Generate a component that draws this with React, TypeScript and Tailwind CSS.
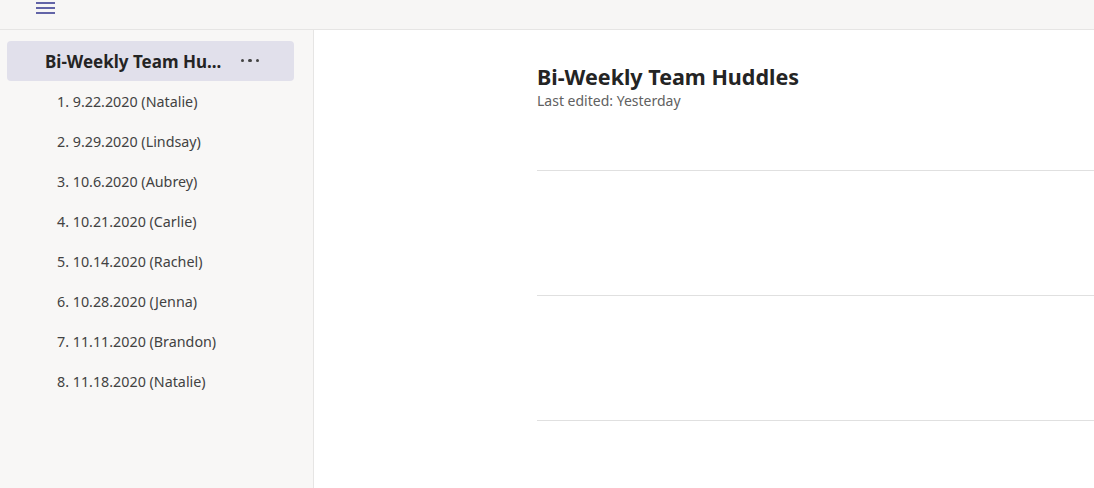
const pages = [
  "1. 9.22.2020 (Natalie)",
  "2. 9.29.2020 (Lindsay)",
  "3. 10.6.2020 (Aubrey)",
  "4. 10.21.2020 (Carlie)",
  "5. 10.14.2020 (Rachel)",
  "6. 10.28.2020 (Jenna)",
  "7. 11.11.2020 (Brandon)",
  "8. 11.18.2020 (Natalie)",
];

export default function App() {
  return (
    <div
      className="flex h-[488px] w-[1094px] flex-col overflow-hidden bg-white text-[#242424]"
      style={{ fontFamily: '"Noto Sans", "Open Sans", sans-serif' }}
    >
      {/* Top bar */}
      <div className="flex h-[30px] shrink-0 items-start border-b border-[#e6e5e4] bg-[#f7f6f5] pl-[36px]">
        <div className="flex w-[19px] flex-col gap-[3px] pt-[2px]">
          <span className="h-[2px] w-full bg-[#6264a7]" />
          <span className="h-[2px] w-full bg-[#6264a7]" />
          <span className="h-[2px] w-full bg-[#6264a7]" />
        </div>
      </div>

      <div className="flex min-h-0 flex-1">
        {/* Sidebar */}
        <aside className="flex w-[314px] shrink-0 flex-col border-r border-[#e6e5e4] bg-[#f8f7f6] pl-[7px] pr-[19px] pt-[11px]">
          <div className="flex h-[40px] items-center justify-between rounded-[4px] bg-[#e1e0eb] pl-[38px] pr-[35px]">
            <span className="pt-[2px] text-[17px] font-bold text-[#242424]">Bi-Weekly Team Hu...</span>
            <div className="flex gap-[4px] pb-[1px]">
              <span className="h-[3.5px] w-[3.5px] rounded-full bg-[#424242]" />
              <span className="h-[3.5px] w-[3.5px] rounded-full bg-[#424242]" />
              <span className="h-[3.5px] w-[3.5px] rounded-full bg-[#424242]" />
            </div>
          </div>
          <ul className="flex flex-col">
            {pages.map((p) => (
              <li key={p} className="flex h-[40px] items-center pl-[50px] pt-[2px] text-[14.3px] text-[#424242]">
                {p}
              </li>
            ))}
          </ul>
        </aside>

        {/* Main */}
        <main className="flex flex-1 flex-col pl-[223px] pt-[32px]">
          <h1 className="text-[21.5px] font-bold leading-[30px] text-[#242424]">Bi-Weekly Team Huddles</h1>
          <p className="text-[14px] leading-[18px] text-[#616161]">Last edited: Yesterday</p>
          <div className="mt-[60px] h-[125px] border-t border-[#e0e0e0]" />
          <div className="h-[125px] border-t border-[#e0e0e0]" />
          <div className="border-t border-[#e0e0e0]" />
        </main>
      </div>
    </div>
  );
}
